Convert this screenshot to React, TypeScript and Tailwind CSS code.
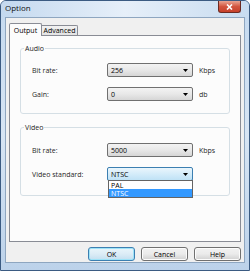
import React from 'react';

const font = { fontFamily: '"Open Sans", "Noto Sans", sans-serif' };

function Combo({ value, focused }: { value: string; focused?: boolean }) {
  return (
    <div
      className={`w-[86px] h-[14px] rounded-[2px] border flex items-center justify-between pl-[3px] pr-[4px] ${
        focused
          ? 'border-[#3c7fb1] bg-gradient-to-b from-[#eaf6fd] to-[#bfe2f6]'
          : 'border-[#707070] bg-gradient-to-b from-[#f3f3f3] via-[#e8e8e8] to-[#d6d6d6]'
      }`}
    >
      <span className="text-[7px] leading-none text-black">{value}</span>
      <svg width="5" height="3" viewBox="0 0 5 3">
        <path d="M0 0h5L2.5 3z" fill="#000" />
      </svg>
    </div>
  );
}

function Row({ label, value, unit, focused, children }: { label: string; value: string; unit?: string; focused?: boolean; children?: React.ReactNode }) {
  return (
    <div className="flex items-center h-[14px]">
      <span className="w-[86px] pl-[11px] text-[7px] leading-none text-[#1e1e1e]">{label}</span>
      <div className="relative">
        <Combo value={value} focused={focused} />
        {children}
      </div>
      {unit && <span className="ml-[6px] text-[7px] leading-none text-[#1e1e1e]">{unit}</span>}
    </div>
  );
}

function Btn({ label, primary }: { label: string; primary?: boolean }) {
  return (
    <div
      className={`w-[47px] h-[14px] rounded-[3px] border flex items-center justify-center text-[7px] leading-none text-black ${
        primary
          ? 'border-[#3c7fb1] bg-gradient-to-b from-[#e9f5fb] via-[#dcecf6] to-[#c3dff0] shadow-[inset_0_0_0_1px_#9ee3f8]'
          : 'border-[#707070] bg-gradient-to-b from-[#f2f2f2] via-[#ebebeb] to-[#d0d0d0] shadow-[inset_0_0_0_1px_#fcfcfc]'
      }`}
    >
      {label}
    </div>
  );
}

export default function App() {
  return (
    <div style={font} className="w-[250px] h-[271px] flex flex-col rounded-t-[6px] border border-[#3b5b82] bg-gradient-to-b from-[#c4d9ef] via-[#d7e5f4] to-[#bcd2ea] overflow-hidden">
      {/* title bar */}
      <div className="h-[16px] flex items-start justify-between pl-[4px] pr-[8px] bg-gradient-to-r from-[#c4d9ef] via-[#e6eff9] to-[#c8dcf0]">
        <span className="mt-[3px] text-[8px] leading-none text-[#111]">Option</span>
        <div className="w-[23px] h-[12px] rounded-b-[3px] border border-t-0 border-[#6b2a22] bg-gradient-to-b from-[#e8a493] via-[#d2553f] to-[#c6402a] flex items-center justify-center">
          <svg width="7" height="6" viewBox="0 0 7 6">
            <path d="M1 0.5l5 5M6 0.5l-5 5" stroke="#fff" strokeWidth="1.6" />
          </svg>
        </div>
      </div>

      {/* client */}
      <div className="mx-[4px] h-[246px] border border-[#8ea6c0] bg-[#f0f0f0] flex flex-col px-[3px] pt-[5px]">
        {/* tabs */}
        <div className="flex items-end h-[12px] relative z-10">
          <div className="h-[13px] w-[33px] -mb-[1px] border border-b-0 border-[#898c95] bg-[#fcfcfc] rounded-t-[2px] flex items-center justify-center text-[7px] leading-none text-black">
            Output
          </div>
          <div className="h-[10px] w-[36px] border border-l-0 border-b-0 border-[#898c95] bg-gradient-to-b from-[#f2f2f2] to-[#e3e3e3] rounded-tr-[2px] flex items-center justify-center text-[7px] leading-none text-black">
            Advanced
          </div>
        </div>
        {/* tab panel */}
        <div className="w-[232px] h-[207px] border border-[#898c95] bg-[#fcfcfc] px-[10px] pt-[9px]">
          <fieldset className="border border-[#d5dfe5] rounded-[3px] h-[69px] flex flex-col">
            <legend className="ml-[3px] px-[1px] text-[7px] leading-none text-[#1e1e1e]">Audio</legend>
            <div className="flex flex-col gap-[10px] mt-[11px]">
              <Row label="Bit rate:" value="256" unit="Kbps" />
              <Row label="Gain:" value="0" unit="db" />
            </div>
          </fieldset>
          <fieldset className="mt-[10px] border border-[#d5dfe5] rounded-[3px] h-[72px] flex flex-col">
            <legend className="ml-[3px] px-[1px] text-[7px] leading-none text-[#1e1e1e]">Video</legend>
            <div className="flex flex-col gap-[10px] mt-[12px]">
              <Row label="Bit rate:" value="5000" unit="Kbps" />
              <Row label="Video standard:" value="NTSC" focused>
                <div className="absolute left-[1px] top-[13px] w-[85px] border border-[#646464] bg-white flex flex-col z-20">
                  <div className="h-[8px] flex items-center pl-[2px] text-[7px] leading-none text-black">PAL</div>
                  <div className="h-[8px] flex items-center pl-[2px] text-[7px] leading-none text-white bg-[#3399ff]">NTSC</div>
                </div>
              </Row>
            </div>
          </fieldset>
        </div>
        {/* buttons */}
        <div className="mt-[5px] flex justify-end gap-[6px]">
          <Btn label="OK" primary />
          <Btn label="Cancel" />
          <Btn label="Help" />
        </div>
      </div>
    </div>
  );
}
